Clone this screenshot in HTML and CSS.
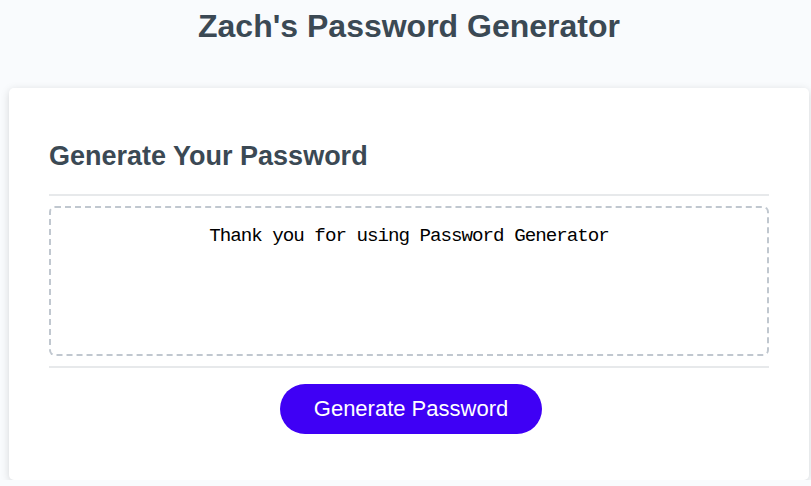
FILE: index.html
```html
<!DOCTYPE html>
<html lang="en">
<head>
<meta charset="UTF-8">
<title>Password Generator</title>
<link rel="stylesheet" href="styles.css">
</head>
<body>
<div class="wrapper">
  <header>
    <h1>Zach's Password Generator</h1>
  </header>
  <div class="card">
    <div class="card-header">
      <h2>Generate Your Password</h2>
    </div>
    <div class="card-body">
      <textarea readonly id="password" aria-label="Generated Password">Thank you for using Password Generator</textarea>
    </div>
    <div class="card-footer">
      <button class="btn" id="generate">Generate Password</button>
    </div>
  </div>
</div>
</body>
</html>
```
FILE: styles.css
```css
*, *::before, *::after {
  box-sizing: border-box;
}

html, body {
  margin: 0;
  padding: 0;
}

body {
  font-family: "Liberation Sans", Arial, sans-serif;
  background-color: #f9fbfd;
}

.wrapper {
  padding: 0 2px 0 9px;
}

header {
  text-align: center;
  padding: 8px 0 43px;
  color: hsl(206, 17%, 28%);
}

header h1 {
  margin: 0;
  font-size: 32px;
  line-height: 37px;
  font-weight: bold;
}

.card {
  background-color: #fff;
  border-radius: 5px;
  box-shadow: rgba(0, 0, 0, 0.15) 0 2px 8px 0;
  color: hsl(206, 17%, 28%);
  font-size: 18px;
  max-width: 800px;
  padding: 30px 40px;
}

.card-header h2 {
  margin: 22.5px 0;
  font-size: 27px;
  line-height: 31px;
  font-weight: bold;
}

.card-header::after,
.card-footer::before {
  content: "";
  display: block;
  width: 100%;
  height: 2px;
  background: #e7e9eb;
}

.card-body {
  min-height: 100px;
}

.card-body textarea {
  display: block;
  width: 100%;
  height: 150px;
  margin: 10px 0;
  padding: 17px 10px 10px;
  resize: none;
  border: 2px dashed #c0c7cf;
  border-radius: 6px;
  font-family: "Liberation Mono", "DejaVu Sans Mono", monospace;
  font-size: 19.2px;
  letter-spacing: -1px;
  color: #000;
  text-align: center;
  background: #fff;
  outline: none;
}

.card-footer {
  display: flex;
  flex-direction: column;
  align-items: center;
}

.card-footer::before {
  align-self: stretch;
}

.btn {
  border: none;
  background-color: #3f00f5;
  border-radius: 25px;
  color: #fff;
  font-family: "Liberation Sans", Arial, sans-serif;
  font-size: 22px;
  line-height: 22px;
  margin: 16px 16px 16px 20px;
  padding: 14px 34px;
  cursor: pointer;
}
```
